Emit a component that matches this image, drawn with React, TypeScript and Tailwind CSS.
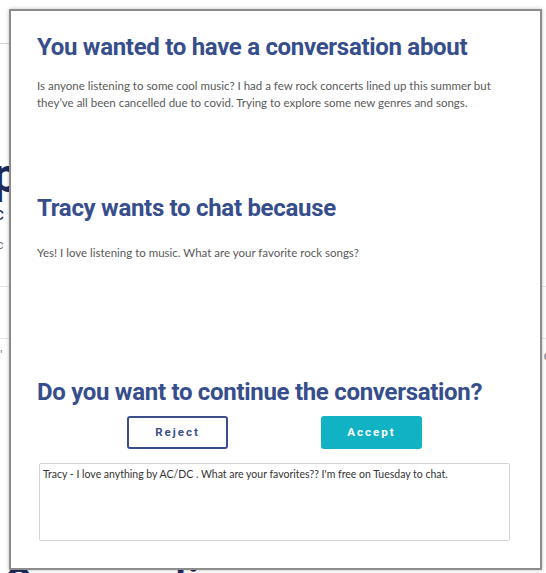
import React from 'react';

const heading = "font-['Roboto',sans-serif] font-bold text-[#364e8c] text-[24px] leading-[28px] tracking-[-0.3px]";
const body = "font-['Lato',sans-serif] text-[#595959] text-[11.5px] leading-[17px]";

// page behind the modal, only the edges show
const BackgroundPage = () => (
  <div className="absolute inset-0 flex flex-col font-['Roboto',sans-serif]">
    <div className="h-[44px] border-b border-gray-300 w-[9px]" />
    <div className="mt-[104px] ml-[-80px] text-[48px] font-bold text-[#1c2b5e] leading-[56px]">Help</div>
    <div className="ml-[-10px] text-[18px] text-[#1c2b5e] leading-[20px]">lc</div>
    <div className="flex justify-between mt-[12px] text-[12px] text-gray-500 h-[51px] border-b border-gray-200">
      <span className="ml-[-3px]">c</span>
      <span className="mr-[-4px] mt-[4px]">|</span>
    </div>
    <div className="flex justify-between text-[12px] text-gray-500 h-[52px] border-b border-gray-200 pt-[8px]">
      <span className="ml-[-4px]">,</span>
    </div>
    <div className="flex justify-between text-[12px] text-gray-500 pt-[8px]">
      <span className="ml-[-6px]">c'</span>
      <span className="mr-[-4px]">c</span>
    </div>
    <div className="mt-auto ml-[5px] mb-[-30px] text-[40px] font-bold text-[#1c2b5e] leading-[40px]">Conversations</div>
  </div>
);

const App = () => {
  return (
    <div className="relative w-[546px] h-[573px] overflow-hidden bg-white">
      <BackgroundPage />

      <div className="absolute left-[9px] top-[9px] w-[533px] h-[561px] bg-white border-2 border-[#8c8c8c] shadow-[0_0_4px_rgba(0,0,0,0.25)] pl-[26px] pr-[30px] flex flex-col">
        <h2 className={`${heading} mt-[22px]`}>You wanted to have a conversation about</h2>
        <p className={`${body} mt-[16px]`}>
          Is anyone listening to some cool music? I had a few rock concerts lined up this summer but they’ve all been cancelled due to covid. Trying to explore some new genres and songs.
        </p>

        <h2 className={`${heading} mt-[83px]`}>Tracy wants to chat because</h2>
        <p className={`${body} mt-[22px]`}>Yes! I love listening to music. What are your favorite rock songs?</p>

        <h2 className={`${heading} mt-[117px]`}>Do you want to continue the conversation?</h2>

        <div className="flex mt-[10px] ml-[90px] gap-[93px]">
          <button className="w-[101px] h-[33px] rounded-[3px] border-2 border-[#3a4f8a] text-[#3a4f8a] font-['Roboto',sans-serif] font-bold text-[11.5px] tracking-[2px]">
            Reject
          </button>
          <button className="w-[101px] h-[33px] rounded-[3px] bg-[#12b2c5] text-white font-['Roboto',sans-serif] font-bold text-[11.5px] tracking-[2px]">
            Accept
          </button>
        </div>

        <textarea
          className="mt-[14px] ml-[2px] w-[471px] h-[78px] border border-[#d4d4d4] rounded-[2px] px-[3px] py-[3px] resize-none outline-none font-['Lato',sans-serif] text-[10.5px] leading-[14px] text-[#333]"
          defaultValue="Tracy - I love anything by AC/DC . What are your favorites?? I'm free on Tuesday to chat."
        />
      </div>
    </div>
  );
};

export default App;
